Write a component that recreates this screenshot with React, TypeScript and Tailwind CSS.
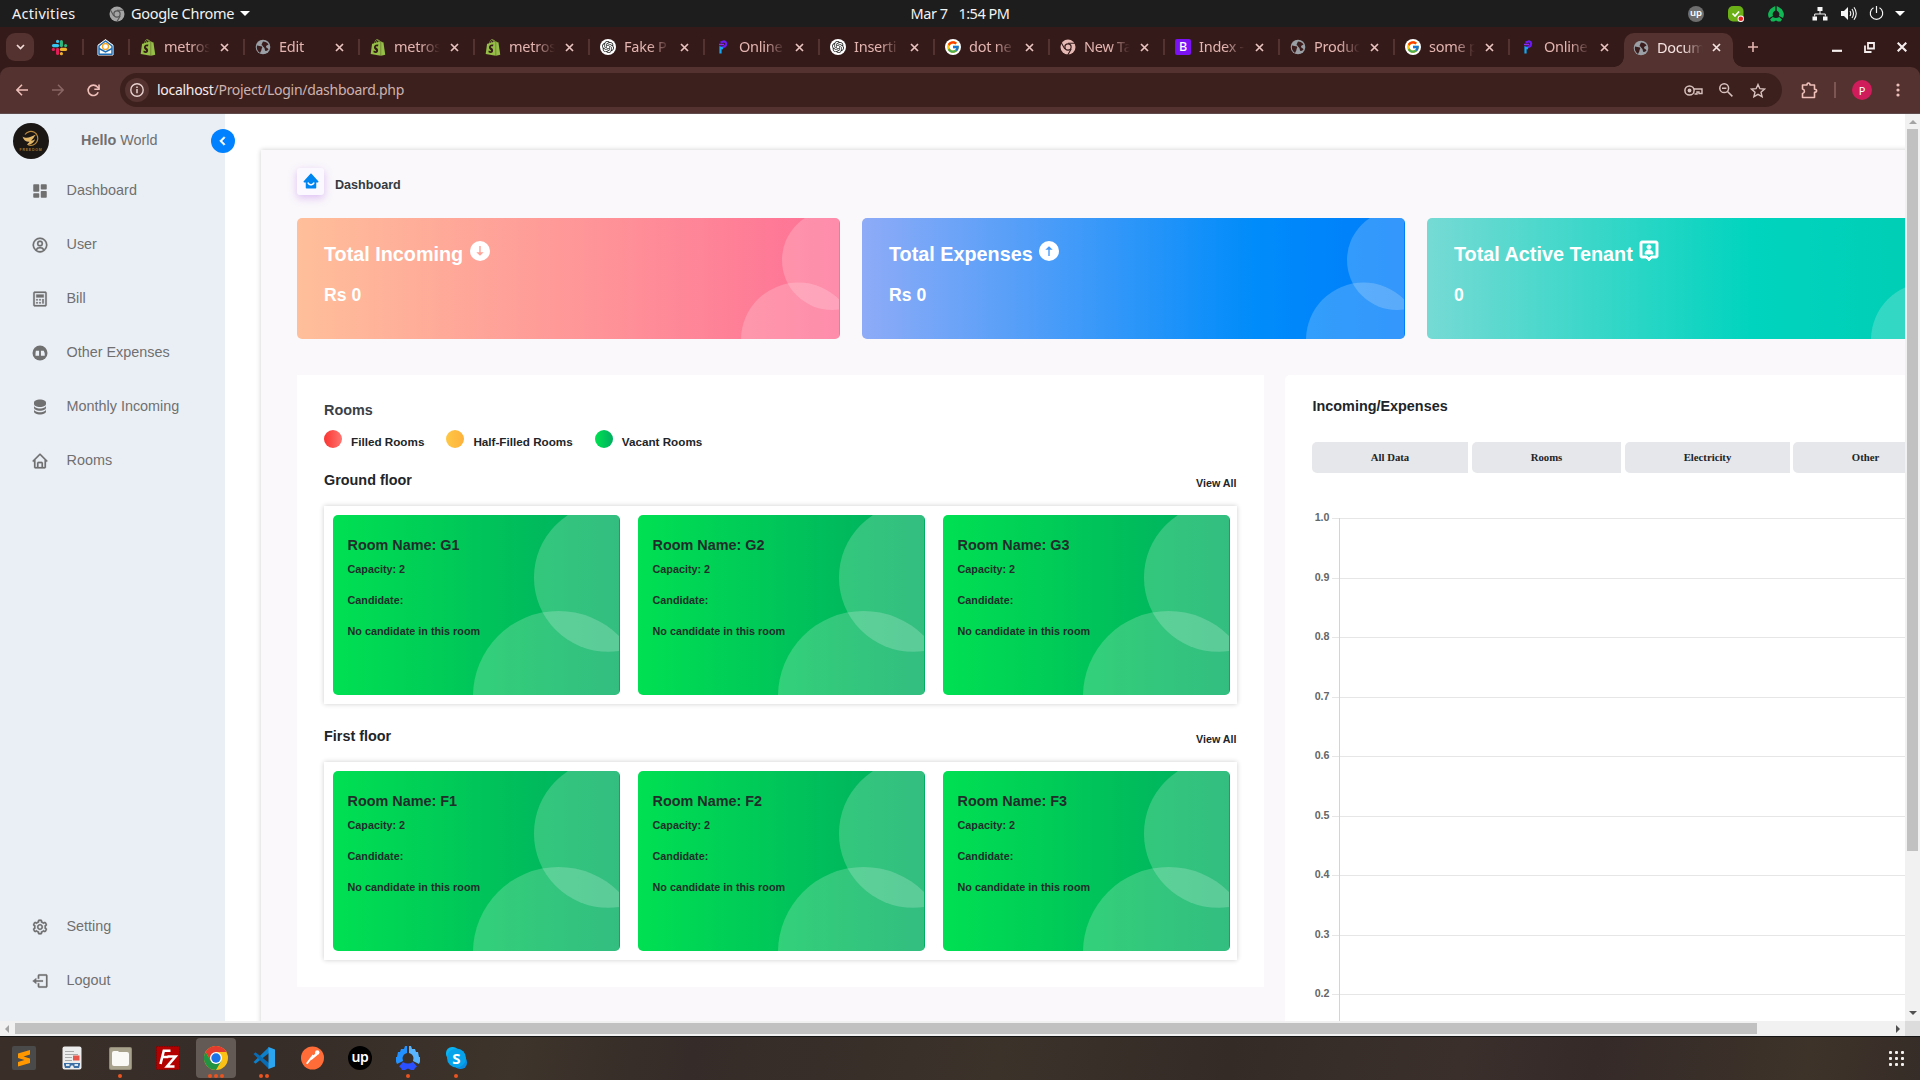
import type { ReactNode } from "react";
import {
  BiSolidDashboard,
  BiUserCircle,
  BiCalculator,
  BiSolidData,
  BiHome,
  BiCog,
  BiLogOut,
  BiSolidHomeSmile,
  BiUserPin,
  BiChevronLeft,
} from "react-icons/bi";
import { FaShopify } from "react-icons/fa";
import { FcGoogle } from "react-icons/fc";
import { SiOpenai } from "react-icons/si";

/* ---------- browser and desktop glyphs ---------- */

const Slack = () => (
  <svg width="17" height="17" viewBox="0 0 24 24">
    <g fill="none" strokeWidth="4.4" strokeLinecap="round">
      <path d="M9.300 9.300H3.500" stroke="#36c5f0" />
      <path d="M14.700 9.300V3.500" stroke="#2eb67d" />
      <path d="M14.700 14.700h5.800" stroke="#ecb22e" />
      <path d="M9.300 14.700v5.800" stroke="#e01e5a" />
      <path d="M9.300 3.300v.1" stroke="#36c5f0" />
      <path d="M20.700 9.300h-.1" stroke="#2eb67d" />
      <path d="M14.700 20.700v-.1" stroke="#ecb22e" />
      <path d="M3.300 14.700h.1" stroke="#e01e5a" />
    </g>
  </svg>
);

const Mailbox = () => (
  <svg width="17" height="17" viewBox="0 0 17 17">
    <path d="M1 6.2 8.5 .6 16 6.2V16H1z" fill="#fff" stroke="#fff" strokeLinejoin="round" />
    <path d="M2 7 8.5 2 15 7v8.2H2z" fill="#fff" stroke="#1e6fb8" strokeWidth="1.5" strokeLinejoin="round" />
    <circle cx="8.5" cy="7.5" r="3" fill="none" stroke="#f5a623" strokeWidth="1.3" />
    <path d="M2 9.5 8.5 13 15 9.5" fill="none" stroke="#1e6fb8" strokeWidth="1.5" />
  </svg>
);

const Globe = () => (
  <svg width="16" height="16" viewBox="0 0 16 16">
    <circle cx="8" cy="8" r="7.3" fill="#9aa0a6" />
    <path d="M2 6.5c2 0 3 1 5 1 1 1.200-1 2-.5 3.500-.5 1-1 2.200-1.500 3C2.500 12.500 1.300 9.500 2 6.500zM8 2.500c2 0 4.500 1 5.500 3-1 1-2 .5-2.500 2 0 1.500 2 1.500 2.500 3-1 1-2 1.500-3 1.500-1-1-.5-2.500-1.500-3.500-1.500-1-1-2-2.500-2.500.5-1.500 1-2.500 1.500-3.500z" fill="#3a1d1c" />
  </svg>
);

const Shopify = () => <FaShopify size={17} color="#95bf47" />;

const OpenAI = () => (
  <span className="flex size-4 items-center justify-center rounded-full bg-white">
    <SiOpenai size={12} color="#222" />
  </span>
);

const Google = () => (
  <span className="flex size-4 items-center justify-center rounded-full bg-white">
    <FcGoogle size={14} />
  </span>
);

const OnlineP = () => (
  <svg width="16" height="16" viewBox="0 0 16 16">
    <path d="M5.500 3.500 9 2.300c2.500.5 3 3.500.5 5.200L6 9" fill="none" stroke="#6a1bf2" strokeWidth="2.200" />
    <path d="M4 5.500h5" stroke="#8c2bf5" strokeWidth="1.600" />
    <path d="M5.500 14.500V8.500l2.500 1" fill="none" stroke="#12a8f5" strokeWidth="2.200" />
  </svg>
);

const MonoChrome = ({ size = 16, ring = "#e7b9b4", gap = "#351b1b" }: { size?: number; ring?: string; gap?: string }) => (
  <svg width={size} height={size} viewBox="0 0 16 16">
    <circle cx="8" cy="8" r="7.500" fill={ring} />
    <circle cx="8" cy="8" r="3.700" fill={gap} />
    <circle cx="8" cy="8" r="2.500" fill={ring} />
    <path d="M8 4.300h7M4.800 9.900 1.300 3.800M11.200 9.900 7.700 16" stroke={gap} strokeWidth="1.100" />
  </svg>
);

const Bootstrap = () => (
  <span className="flex size-4 items-center justify-center rounded-[2px] bg-[#7a12f3] text-[12.5px] font-medium leading-none text-white">B</span>
);

type Tab = { icon: ReactNode; label: string };

const tabs: Tab[] = [
  { icon: <Shopify />, label: "metros" },
  { icon: <Globe />, label: "Edit" },
  { icon: <Shopify />, label: "metros" },
  { icon: <Shopify />, label: "metros" },
  { icon: <OpenAI />, label: "Fake P" },
  { icon: <OnlineP />, label: "Online" },
  { icon: <OpenAI />, label: "Inserti" },
  { icon: <Google />, label: "dot ne" },
  { icon: <MonoChrome />, label: "New Ta" },
  { icon: <Bootstrap />, label: "Index -" },
  { icon: <Globe />, label: "Produc" },
  { icon: <Google />, label: "some p" },
  { icon: <OnlineP />, label: "Online" },
];

const CloseX = ({ color = "#e9c3bf" }: { color?: string }) => (
  <svg width="9" height="9" viewBox="0 0 9 9">
    <path d="M1 1l7 7M8 1 1 8" stroke={color} strokeWidth="1.700" />
  </svg>
);

const TabLabel = ({ children }: { children: ReactNode }) => (
  <span className="ml-2 w-[52px] whitespace-nowrap tracking-[-0.25px] [mask-image:linear-gradient(to_right,black_26px,transparent_46px)]">{children}</span>
);

function TopBar() {
  return (
    <header className="grid h-[27px] shrink-0 grid-cols-3 items-center bg-[#1d1d1d] text-[14.5px] text-[#f2f2f2]">
      <div className="flex items-center pl-3">
        <span className="w-[62px] tracking-[0.3px]">Activities</span>
        <span className="ml-[35px] mr-[6px]">
          <MonoChrome size={16} ring="#a5a5a5" gap="#555" />
        </span>
        <span className="tracking-[-0.3px]">Google Chrome</span>
        <span className="ml-[6px] border-x-[5px] border-t-[5px] border-x-transparent border-t-white" />
      </div>
      <div className="flex justify-center gap-[11px] tracking-[-0.5px]">
        <span>Mar 7</span>
        <span>1:54 PM</span>
      </div>
      <div className="flex items-center justify-end pr-[15px]">
        <span className="mr-6 flex size-4 items-center justify-center rounded-full bg-[#6e6e6e] pb-[2px] text-[9.5px] font-semibold leading-none text-white">up</span>
        <svg className="mr-6" width="16" height="16" viewBox="0 0 16 16">
          <rect width="15.500" height="15.500" rx="5" fill="#6bb016" />
          <path d="m4.500 7.500 2.500 2.500 4-4.500" fill="none" stroke="#fff" strokeWidth="1.700" />
          <circle cx="12.800" cy="12.800" r="3.200" fill="#fff" />
          <circle cx="12.800" cy="12.800" r="2.300" fill="#e8201c" />
        </svg>
        <svg className="mr-[28px]" width="16" height="16" viewBox="0 0 16 16">
          <path d="M7.300 0v4.500Q4.800 5.500 4.600 8l.4 2-4 2Q-.5 9 .5 6.500L2 3.500l2.500-2z" fill="#12b755" />
          <path d="M8.700 0v4.500q2.500 1 2.700 3.500l-.4 2 4 2q1.500-3 .5-5.500L14 3.500l-2.500-2z" fill="#12b755" />
          <path d="m4.800 11-2.800 2.500 1.500 2H6l2-1 2 1h2.500l1.500-2-2.800-2.500Q8 13 4.800 11z" fill="#12b755" />
        </svg>
        <svg className="mr-[13px]" width="16" height="14" viewBox="0 0 16 14">
          <path d="M5.500 0h5v4h-5zM.5 9.500h4.500V13.500H.5zM11 9.500h4.500v4H11z" fill="#f5f5f5" />
          <path d="M8 4v3M2.700 9.500V7h10.600v2.500" fill="none" stroke="#f5f5f5" />
        </svg>
        <svg className="mr-[12px]" width="16" height="15" viewBox="0 0 16 15">
          <path d="M0 5h3l4-4v13l-4-4H0z" fill="#f5f5f5" />
          <path d="M9 5q1.500 2.500 0 5M11 3q3 4.500 0 9M13 1.200q4.500 6.300 0 12.600" fill="none" stroke="#f5f5f5" strokeWidth="1.100" />
        </svg>
        <svg className="mr-[11px]" width="15" height="15" viewBox="0 0 15 15">
          <path d="M4.500 1.800a6.200 6.200 0 1 0 6 0M7.500 0v7" fill="none" stroke="#f5f5f5" strokeWidth="1.200" />
        </svg>
        <span className="border-x-[5px] border-t-[5px] border-x-transparent border-t-white" />
      </div>
    </header>
  );
}

function TabStrip() {
  return (
    <div className="flex h-10 shrink-0 items-center bg-[#351a1a] text-[14.5px] text-[#e4b5b0]">
      <div className="ml-[6px] flex h-[28px] w-7 items-center justify-center rounded-[9px] bg-[#53322f]">
        <svg width="9" height="6" viewBox="0 0 9 6">
          <path d="m1 1 3.500 3.500L8 1" fill="none" stroke="#f3dcd9" strokeWidth="1.700" />
        </svg>
      </div>
      <div className="flex h-4 w-[48px] items-center justify-end pr-[14px]"><Slack /></div>
      <div className="flex h-4 w-[46px] items-center justify-end border-l-2 border-[#53322f] pr-[14px]"><Mailbox /></div>
      {tabs.map((t, i) => (
        <div key={i} className="flex h-4 w-[115px] shrink-0 items-center border-l-2 border-[#53322f] pl-[10px]">
          <span className="flex w-4 justify-center">{t.icon}</span>
          <TabLabel>{t.label}</TabLabel>
          <span className="ml-[4px]"><CloseX /></span>
        </div>
      ))}
      <div className="relative ml-px flex h-[34px] w-[109px] shrink-0 items-center self-end rounded-t-[10px] bg-[#53322f] pb-[5px] pl-[9px] text-[#f5e3e1] before:absolute before:-left-[10px] before:bottom-0 before:size-[10px] before:bg-[radial-gradient(circle_at_0_0,transparent_9.500px,#53322f_10px)] before:content-[''] after:absolute after:-right-[10px] after:bottom-0 after:size-[10px] after:bg-[radial-gradient(circle_at_100%_0,transparent_9.500px,#53322f_10px)] after:content-['']">
        <Globe />
        <TabLabel>Docum</TabLabel>
        <span className="ml-[3px]"><CloseX color="#f5e3e1" /></span>
      </div>
      <svg className="ml-[15px]" width="10" height="10" viewBox="0 0 10 10">
        <path d="M5 0v10M0 5h10" stroke="#e4b5b0" strokeWidth="1.600" />
      </svg>
      <div className="ml-auto flex items-center gap-[22px] pr-[13px]">
        <svg width="10" height="10" viewBox="0 0 10 10"><path d="M0 8.800h10" stroke="#f5eeee" strokeWidth="2.200" /></svg>
        <svg width="11" height="11" viewBox="0 0 11 11">
          <path d="M4 1h6v5.500H4zM1 3.500V10h6.500" fill="none" stroke="#f5eeee" strokeWidth="1.800" />
        </svg>
        <svg width="10" height="10" viewBox="0 0 10 10"><path d="m.7.7 8.600 8.600M9.300.7.7 9.300" stroke="#f5eeee" strokeWidth="2.100" /></svg>
      </div>
    </div>
  );
}

function Toolbar() {
  return (
    <div className="h-[47px] shrink-0 bg-[#351a1a]">
      <div className="flex h-full items-center rounded-t-[9px] border-b border-[#5f4b4b] bg-[#53322f]">
        <svg className="ml-4" width="12" height="12" viewBox="0 0 12 12">
          <path d="M12 6H1M6 .800.8 6 6 11.200" fill="none" stroke="#efbfba" strokeWidth="1.600" />
        </svg>
        <svg className="ml-6" width="12" height="12" viewBox="0 0 12 12">
          <path d="M0 6h11M6 .800 11.200 6 6 11.200" fill="none" stroke="#8a6664" strokeWidth="1.600" />
        </svg>
        <svg className="ml-[23px]" width="13" height="13" viewBox="0 0 13 13">
          <path d="M11.200 8.200A5.200 5.200 0 1 1 10.400 3L12 4.700" fill="none" stroke="#efbfba" strokeWidth="1.600" />
          <path d="M12 .5v4.800H7.300" fill="none" stroke="#efbfba" strokeWidth="1.600" />
        </svg>
        <div className="ml-[20px] flex h-[34px] w-[1662px] items-center rounded-full bg-[#3c201d] pl-[5px]">
          <span className="flex size-6 items-center justify-center rounded-full bg-[#53322f]">
            <svg width="14" height="14" viewBox="0 0 14 14">
              <circle cx="7" cy="7" r="6.200" fill="none" stroke="#e9d3d0" strokeWidth="1.400" />
              <path d="M7 6v4.200M7 3.400V5" stroke="#e9d3d0" strokeWidth="1.500" />
            </svg>
          </span>
          <span className="ml-2 pb-px text-[14px] tracking-[-0.29px] text-[#cdb3b0]"><span className="text-[#f8ecea]">localhost</span>/Project/Login/dashboard.php</span>
          <svg className="ml-auto" width="19" height="11" viewBox="0 0 19 11">
            <circle cx="5.500" cy="5.500" r="4.600" fill="none" stroke="#d8c2bf" strokeWidth="1.500" />
            <circle cx="5.500" cy="5.500" r="1.900" fill="#d8c2bf" />
            <path d="M10 4h8v4.500h-3V7h-2v2h-2.500" fill="none" stroke="#d8c2bf" strokeWidth="1.400" />
          </svg>
          <svg className="ml-[16px]" width="14" height="14" viewBox="0 0 14 14">
            <circle cx="5.200" cy="5.200" r="4.400" fill="none" stroke="#d8c2bf" strokeWidth="1.500" />
            <path d="M8.500 8.500 13.400 13.400M3 5.200h4.400" stroke="#d8c2bf" strokeWidth="1.500" />
          </svg>
          <svg className="ml-[17px] mr-[16px]" width="16" height="15" viewBox="0 0 16 15">
            <path d="m8 1.500 1.900 4.200 4.600.4L11 9.200l1.100 4.500L8 11.300l-4.100 2.400L5 9.200 1.500 6.100l4.600-.4z" fill="none" stroke="#d8c2bf" strokeWidth="1.400" />
          </svg>
        </div>
        <svg className="ml-[19px]" width="17" height="17" viewBox="0 0 17 17">
          <path d="M1.500 3H6c0-2.600 3-2.600 3 0h4.500v4.200c2.800 0 2.800 3 0 3V15.500h-12v-4c2.600-.5 2.600-4 0-4.500z" fill="none" stroke="#efbfba" strokeWidth="1.600" strokeLinejoin="round" />
        </svg>
        <span className="ml-[16px] h-4 w-[2px] bg-[#7b5652]" />
        <span className="ml-[16px] flex size-5 items-center justify-center rounded-full bg-[#d01c5b] text-[11px] leading-none text-white">P</span>
        <svg className="ml-[24px]" width="4" height="14" viewBox="0 0 4 14">
          <g fill="#efbfba"><circle cx="2" cy="2" r="1.600" /><circle cx="2" cy="7" r="1.600" /><circle cx="2" cy="12" r="1.600" /></g>
        </svg>
      </div>
    </div>
  );
}

/* ---------- dashboard ---------- */

const ExpenseIcon = () => (
  <svg width="18" height="18" viewBox="0 0 24 24">
    <circle cx="12" cy="12" r="10" fill="currentColor" />
    <path d="M6.500 9h4.300v6.500H6v-3.200zM13.200 9h3.800l1.300 3.200v3.300h-5.100z" fill="#eaeff6" />
    <path d="M11.500 8.500h1v7h-1z" fill="currentColor" />
  </svg>
);

const ArrowBadge = ({ up }: { up?: boolean }) => (
  <svg width="24" height="24" viewBox="0 0 24 24">
    <mask id={up ? "arrow-up" : "arrow-down"}>
      <rect width="24" height="24" fill="#fff" />
      <path
        d={up ? "M11.300 17v-6.200H8.300L12 7.300l3.700 3.500h-3v6.200z" : "M11.300 7v6.200H8.300l3.700 3.500 3.700-3.500h-3V7z"}
        fill="#000"
      />
    </mask>
    <circle cx="12" cy="12" r="10" fill="currentColor" mask={up ? "url(#arrow-up)" : "url(#arrow-down)"} />
  </svg>
);

const menu = [
  { icon: <BiSolidDashboard size={18} />, label: "Dashboard" },
  { icon: <BiUserCircle size={18} strokeWidth={0.3} />, label: "User" },
  { icon: <BiCalculator size={18} strokeWidth={0.3} />, label: "Bill" },
  { icon: <ExpenseIcon />, label: "Other Expenses" },
  { icon: <BiSolidData size={18} />, label: "Monthly Incoming" },
  { icon: <BiHome size={18} strokeWidth={0.3} />, label: "Rooms" },
];

function MenuItem({ icon, label }: { icon: ReactNode; label: string }) {
  return (
    <li className="flex h-[54px] items-center pl-[30.5px]">
      <span className="mt-[2px]">{icon}</span>
      <span className="ml-[18px] text-[14.4px] leading-5">{label}</span>
    </li>
  );
}

function Sidebar() {
  return (
    <aside className="relative flex w-[225px] shrink-0 flex-col bg-[#eaeff6] font-['Liberation_Sans',sans-serif] text-[#707070]">
      <div className="flex h-[49px] items-start pl-[13px] pt-[9px]">
        <div className="flex size-9 flex-col items-center rounded-full bg-[#1b1715] pt-[7px]">
          <svg width="18" height="17" viewBox="0 0 18 17">
            <path d="M3 4.500A7 7 0 1 1 6 14.800" fill="none" stroke="#b8893f" strokeWidth="1.200" />
            <path d="M.5 6.500C5 9.500 8 7 14 4.500 11.500 7 12 8.500 9 10.500c2 0 3-.5 4-1.500-1 4-4 5.500-8 6 1-2 2-2 2.500-3.200C4 12 1.500 10 .5 6.500z" fill="#e3b768" />
          </svg>
          <span className="mt-[2px] text-[3.500px] font-bold leading-none tracking-[0.8px] text-[#a8782f]">FREEDOM</span>
        </div>
        <p className="ml-8 mt-[7px] text-[14.4px] leading-5"><b>Hello</b> World</p>
      </div>
      <button className="absolute left-[211px] top-[15px] z-10 flex size-6 items-center justify-center rounded-full bg-[#0081ff] text-white">
        <BiChevronLeft size={18} strokeWidth={0.9} />
      </button>
      <ul>{menu.map((m) => <MenuItem key={m.label} {...m} />)}</ul>
      <ul className="mt-auto pb-[14px]">
        <MenuItem icon={<BiCog size={18} strokeWidth={0.3} />} label="Setting" />
        <MenuItem icon={<BiLogOut size={18} strokeWidth={0.3} />} label="Logout" />
      </ul>
    </aside>
  );
}

function Bubbles() {
  return (
    <svg className="absolute inset-y-0 right-px h-full" viewBox="0 0 100 121">
      <g fill="#fff" fillOpacity=".2">
        <circle cx="59.500" cy="122" r="57.500" />
        <circle cx="93" cy="42" r="50" />
      </g>
    </svg>
  );
}

function StatCard({ title, value, icon, tone }: { title: string; value: string; icon: ReactNode; tone: string }) {
  return (
    <div className={`relative h-[121px] w-[543px] shrink-0 overflow-hidden rounded-[5px] pl-[27px] pt-6 font-bold text-white ${tone}`}>
      <Bubbles />
      <div className="flex h-6 items-start">
        <h2 className="text-[19.8px] leading-6">{title}</h2>
        <span className="-mt-[3px] ml-[4.5px]">{icon}</span>
      </div>
      <p className="mt-[19px] text-[17.6px] leading-5">{value}</p>
    </div>
  );
}

function RoomCard({ name }: { name: string }) {
  return (
    <div className="relative h-[180px] w-[287px] shrink-0 overflow-hidden rounded-[5px] bg-[linear-gradient(to_right,#00e052,#00b85d_75%,#00ae60)] pl-[14.5px] pt-5 text-[10.8px] font-bold leading-[14px] text-[#1f2d2b]">
      <Bubbles />
      <h4 className="relative text-[14.4px] leading-5">Room Name: {name}</h4>
      <p className="relative mt-[7px]">Capacity: 2</p>
      <p className="relative mt-[17px]">Candidate:</p>
      <p className="relative mt-[17px]">No candidate in this room</p>
    </div>
  );
}

function Floor({ title, rooms }: { title: string; rooms: string[] }) {
  return (
    <section className="mt-[22px]">
      <div className="flex h-5 items-center justify-between">
        <h3 className="text-[14.4px] leading-5">{title}</h3>
        <a className="mr-[0.5px] mt-[5px] text-[10.72px] leading-4">View All</a>
      </div>
      <div className="mt-4 flex h-[198px] gap-[18px] bg-white p-[9px] shadow-[0_0_5px_rgba(0,0,0,0.2)]">
        {rooms.map((r) => <RoomCard key={r} name={r} />)}
      </div>
    </section>
  );
}

const legend = [
  { label: "Filled Rooms", dot: "bg-[linear-gradient(to_right,#fb3431,#fd7570)]" },
  { label: "Half-Filled Rooms", dot: "bg-[linear-gradient(to_right,#ffc845,#fdb13c)]" },
  { label: "Vacant Rooms", dot: "bg-[linear-gradient(to_right,#00e251,#00ae60)]" },
];

const filters = [
  { label: "All Data", width: "w-[156px]" },
  { label: "Rooms", width: "w-[149px]" },
  { label: "Electricity", width: "w-[165px]" },
  { label: "Other", width: "w-[145px] -ml-px" },
];

const ticks = ["1.0", "0.9", "0.8", "0.7", "0.6", "0.5", "0.4", "0.3", "0.2"];

function Chart() {
  return (
    <svg className="-ml-[1px] block" width="640" height="560">
      {ticks.map((t, i) => {
        const y = Math.round(45 + i * 59.5) + 0.5;
        return (
          <g key={t}>
            <path d={`M21 ${y}H640`} stroke="#e6e6e6" />
            <text x="18.500" y={y + 2.800} textAnchor="end" className="fill-[#666] text-[10.7px] font-bold">{t}</text>
          </g>
        );
      })}
      <path d="M28.500 45V560" stroke="#d4d4d4" />
    </svg>
  );
}

function Dashboard() {
  return (
    <main className="min-w-0 flex-1 overflow-hidden bg-white pl-9 pt-9 font-['Liberation_Sans',sans-serif] font-bold text-[#212529]">
      <div className="h-[1000px] w-[1800px] bg-[#faf8fb] pl-9 pt-[18px] shadow-[0_0_5px_rgba(0,0,0,0.2)]">
        <div className="flex h-[27px] items-center">
          <span className="flex size-[27px] items-center justify-center rounded-[3px] bg-[#fbf9ff] pb-px text-[#0086f0] shadow-[0_3px_8px_rgba(170,90,230,0.35)]">
            <BiSolidHomeSmile size={18} />
          </span>
          <h1 className="ml-[11px] mt-[6px] text-[12.6px] leading-5 text-[#343a40]">Dashboard</h1>
        </div>
        <div className="mt-[23px] flex gap-[22px]">
          <StatCard title="Total Incoming" value="Rs 0" icon={<ArrowBadge />} tone="bg-[linear-gradient(to_right,#ffbf9a,#fe7096)]" />
          <StatCard title="Total Expenses" value="Rs 0" icon={<ArrowBadge up />} tone="bg-[linear-gradient(to_right,#8eabf7,#008cfa_72%,#007dfa)]" />
          <StatCard title="Total Active Tenant" value="0" icon={<BiUserPin size={24} strokeWidth={0.9} />} tone="bg-[linear-gradient(to_right,#76dad4,#00d4be_60%,#00ccb2)]" />
        </div>
        <div className="mt-9 flex items-start gap-[21px]">
          <div className="h-[612px] w-[967px] shrink-0 bg-white px-[27px] pt-[25px]">
            <h2 className="text-[14.4px] leading-5 text-[#3a4147]">Rooms</h2>
            <div className="mt-[10px] flex h-[18px] gap-[22px]">
              {legend.map((l) => (
                <div key={l.label} className="flex items-center">
                  <span className={`size-[18px] rounded-full ${l.dot}`} />
                  <span className="ml-[9px] mt-[6px] text-[11.7px] leading-4">{l.label}</span>
                </div>
              ))}
            </div>
            <Floor title="Ground floor" rooms={["G1", "G2", "G3"]} />
            <Floor title="First floor" rooms={["F1", "F2", "F3"]} />
          </div>
          <div className="h-[800px] w-[680px] shrink-0 rounded-[5px] bg-white pl-[27px] pt-[21px]">
            <h2 className="ml-[0.5px] text-[14.4px] leading-5">Incoming/Expenses</h2>
            <div className="mt-[26px] flex gap-1 font-['Liberation_Serif',serif] text-[10.72px]">
              {filters.map((f) => (
                <button key={f.label} className={`h-[31px] shrink-0 rounded-l-[5px] bg-[#e6e7ea] font-bold ${f.width}`}>{f.label}</button>
              ))}
            </div>
            <Chart />
          </div>
        </div>
      </div>
    </main>
  );
}

/* ---------- dock ---------- */

const UpworkMark = () => (
  <span className="flex size-6 items-center justify-center rounded-full bg-black pb-[2px] text-[14px] font-semibold leading-none tracking-[-0.3px] text-white">up</span>
);

const dock: { icon: ReactNode; dots: number; active?: boolean }[] = [
  {
    dots: 0,
    icon: (
      <svg width="24" height="24" viewBox="0 0 24 24">
        <rect width="24" height="24" rx="2" fill="#4a4a4a" />
        <path d="M6 7.500 18 4v4.500L11.500 10.500 18 12.500V17L6 20.500V16l6.500-2L6 12z" fill="#ff9800" />
      </svg>
    ),
  },
  {
    dots: 0,
    icon: (
      <svg width="20" height="24" viewBox="0 0 20 24">
        <rect x=".5" y=".5" width="19" height="23" rx="2" fill="#ececec" />
        <path d="M3 5.500h9M3 8.500h13M3 11.500h7M3 14.500h7" stroke="#aaa" />
        <rect x="11" y="9.500" width="6.500" height="5" fill="#e8544a" />
        <path d="M2 17h16v1.500l-1 3.500h-5l-1-2.500h-2L8 22H3l-1-3.500z" fill="#3b6ea5" />
        <path d="M4 19h3.500M12.500 19H16" stroke="#d6e4f0" strokeWidth="1.800" />
      </svg>
    ),
  },
  {
    dots: 1,
    icon: (
      <svg width="23" height="23" viewBox="0 0 23 23">
        <rect width="23" height="23" rx="2" fill="#8f8975" />
        <rect x="1" y="1" width="21" height="21" rx="1" fill="#a8a18c" />
        <path d="M3 6q0-2 2-2h4l1 1h8q2 0 2 2v10q0 2-2 2H5q-2 0-2-2z" fill="#fbf9f5" />
      </svg>
    ),
  },
  {
    dots: 0,
    icon: (
      <svg width="24" height="24" viewBox="0 0 24 24">
        <rect x=".5" y=".5" width="23" height="23" fill="#b30000" stroke="#8a0000" strokeDasharray="1.500 1" />
        <path d="M14.500 4.800H7.800L4.500 18M6.300 11h6M11.500 10.500h8L11 20.500h7.500" fill="none" stroke="#fff" strokeWidth="2.600" />
      </svg>
    ),
  },
  {
    dots: 3,
    active: true,
    icon: (
      <svg width="24" height="24" viewBox="0 0 24 24">
        <circle cx="12" cy="12" r="12" fill="#fbc116" />
        <path d="M1.600 6A12 12 0 0 1 22.400 6H12L6.800 15z" fill="#e33b2e" />
        <path d="M1.600 6A12 12 0 0 0 12 24l5.200-9L12 18 6.800 15z" fill="#229342" />
        <circle cx="12" cy="12" r="6" fill="#fff" />
        <circle cx="12" cy="12" r="4.700" fill="#1a73e8" />
      </svg>
    ),
  },
  {
    dots: 2,
    icon: (
      <svg width="22" height="22" viewBox="0 0 22 22">
        <path d="M16 0v6L2.500 16.800.5 15z" fill="#0e7fc9" />
        <path d="M16 22v-6L2.500 5.200.5 7z" fill="#0a6cb3" />
        <path d="M15.500 0 22 2.500v17L15.500 22z" fill="#2ba5ef" />
      </svg>
    ),
  },
  {
    dots: 0,
    icon: (
      <svg width="23" height="24" viewBox="0 0 24 24">
        <circle cx="12" cy="12" r="12" fill="#ff6c37" />
        <path d="m6 18 7-9" stroke="#fff" strokeWidth="2" />
        <path d="m10 13 5.500-6.500 2 2L11 14z" fill="#fff" />
        <circle cx="17" cy="6.300" r="2.300" fill="#fff" />
      </svg>
    ),
  },
  { dots: 0, icon: <UpworkMark /> },
  {
    dots: 1,
    icon: (
      <svg width="24" height="24" viewBox="0 0 24 24">
        <path d="M11 0v7q-4 1-4.500 5l.5 3-6 3Q-1 14 0 11h1L2 6h2l1-3h3l1-3z" fill="#2391ff" />
        <path d="M13 0v7q4 1 4.500 5l-.5 3 6 3q2-4 1-7h-1l-1-5h-2l-1-3h-3l-1-3z" fill="#5ab5ff" />
        <path d="M7 16 3 20.500l2 1.500 1 2h3l3-1.500 3 1.500h3l1-2 2-1.500L17 16q-5 3-10 0z" fill="#2b50ff" />
      </svg>
    ),
  },
  {
    dots: 1,
    icon: (
      <svg width="21" height="22" viewBox="0 0 21 22">
        <rect width="13" height="13" rx="6" fill="#0ab4f2" />
        <rect x="8" y="9" width="13" height="13" rx="6" fill="#0a8be0" />
        <circle cx="10.500" cy="11" r="9.500" fill="#06a3ea" />
        <text x="10.500" y="16.500" textAnchor="middle" className="fill-white text-[15px] font-bold">S</text>
      </svg>
    ),
  },
];

function Dock() {
  return (
    <footer className="flex h-11 shrink-0 items-center border-t border-[#151515] bg-[linear-gradient(100deg,#3a2f28,#362c28_14%,#3d342b_27%,#352b28_36%,#3b322a_52%,#342b27_64%,#3a2f2b_76%,#352a28_83%,#3d3329_94%,#372d28)] pb-px">
      {dock.map((d, i) => (
        <div key={i} className="flex w-12 justify-center">
          <div className={`relative flex size-10 items-center justify-center rounded-[4px] ${d.active ? "bg-[#635955]" : ""}`}>
            {d.icon}
            <div className="absolute inset-x-0 bottom-0 flex justify-center gap-[2px]">
              {Array.from({ length: d.dots }, (_, k) => (
                <span key={k} className="size-1 rounded-full bg-[#e95420]" />
              ))}
            </div>
          </div>
        </div>
      ))}
      <div className="ml-auto mr-4 grid grid-cols-3 gap-[3px]">
        {Array.from({ length: 9 }, (_, k) => <span key={k} className="size-[3px] rounded-[1px] bg-[#f4f2f0]" />)}
      </div>
    </footer>
  );
}

export default function App() {
  return (
    <div className="flex h-[1080px] w-[1920px] flex-col overflow-hidden bg-white font-['Noto_Sans','Open_Sans',sans-serif]">
      <TopBar />
      <TabStrip />
      <Toolbar />
      <div className="flex min-h-0 flex-1">
        <Sidebar />
        <Dashboard />
        <div className="flex w-[15px] shrink-0 flex-col items-center bg-[#f1f1f1]">
          <span className="mt-[6px] border-x-4 border-b-4 border-x-transparent border-b-[#a3a3a3]" />
          <span className="mt-[5px] h-[722px] w-[11px] bg-[#c1c1c1]" />
          <span className="mb-[6px] mt-auto border-x-4 border-t-4 border-x-transparent border-t-[#505050]" />
        </div>
      </div>
      <div className="flex h-[15px] shrink-0 items-center bg-[#f1f1f1]">
        <span className="ml-[5px] border-y-4 border-r-4 border-y-transparent border-r-[#a3a3a3]" />
        <span className="ml-[6px] h-[11px] w-[1742px] bg-[#c1c1c1]" />
        <span className="ml-auto mr-[5px] border-y-4 border-l-4 border-y-transparent border-l-[#505050]" />
        <span className="h-full w-[15px] bg-[#dcdcdc]" />
      </div>
      <Dock />
    </div>
  );
}
